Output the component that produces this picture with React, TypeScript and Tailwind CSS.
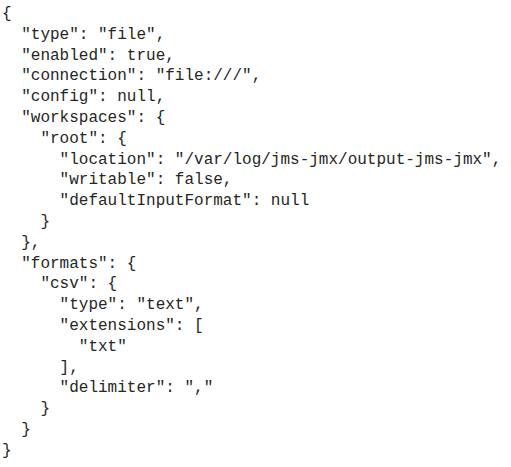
const json = `{
  "type": "file",
  "enabled": true,
  "connection": "file:///",
  "config": null,
  "workspaces": {
    "root": {
      "location": "/var/log/jms-jmx/output-jms-jmx",
      "writable": false,
      "defaultInputFormat": null
    }
  },
  "formats": {
    "csv": {
      "type": "text",
      "extensions": [
        "txt"
      ],
      "delimiter": ","
    }
  }
}`;

export default function App() {
  return (
    <div className="w-[511px] h-[467px] bg-white overflow-hidden">
      <pre className="pl-[2px] pt-[4px] text-[16px] leading-[20.8px] text-[#262626] font-['Liberation_Mono','Courier_New',monospace]">
        {json}
      </pre>
    </div>
  );
}
